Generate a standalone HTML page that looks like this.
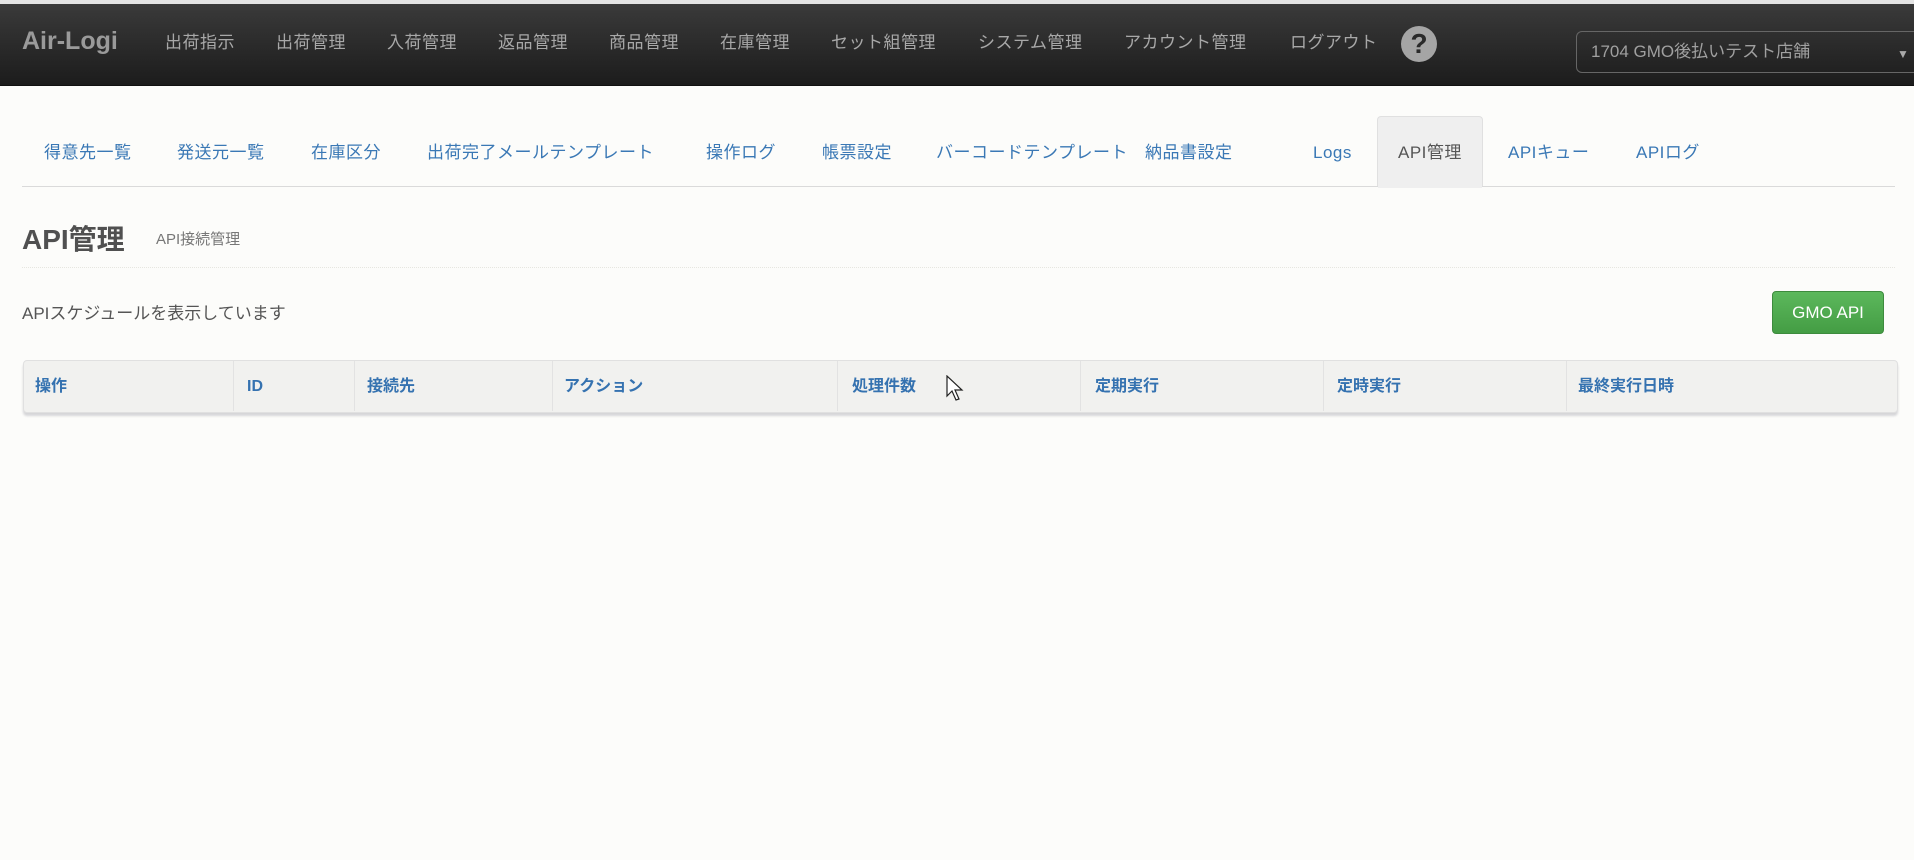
<!DOCTYPE html>
<html><head><meta charset="utf-8"><style>
*{margin:0;padding:0;box-sizing:border-box}
body{width:1914px;height:860px;overflow:hidden;background:#fcfcfa;font-family:"Liberation Sans","Noto Sans CJK JP",sans-serif;position:relative}
.a{position:absolute;white-space:nowrap;line-height:24px}
#top{position:absolute;left:0;top:0;width:1914px;height:4px;background:#e4e4e4}
#nav{position:absolute;left:0;top:4px;width:1914px;height:82px;background:linear-gradient(#3a3a3a,#1c1c1c);border-bottom:1px solid #111}
.n{font-size:17px;color:#a8a8a8;top:31px;letter-spacing:0.5px}
.t{font-size:17px;color:#3a78b5;top:141px;letter-spacing:0.5px}
.h{font-size:16px;color:#3572b0;font-weight:bold;top:375px}
.sep{position:absolute;top:361px;width:1px;height:50px;background:#e2e2e2}
</style></head><body>
<div id="top"></div>
<div id="nav"></div>
<div class="a" style="left:22px;top:29px;font-size:25px;font-weight:bold;color:#9a9a9a">Air-Logi</div>
<div class="a n" style="left:165px">出荷指示</div>
<div class="a n" style="left:276px">出荷管理</div>
<div class="a n" style="left:387px">入荷管理</div>
<div class="a n" style="left:498px">返品管理</div>
<div class="a n" style="left:609px">商品管理</div>
<div class="a n" style="left:720px">在庫管理</div>
<div class="a n" style="left:831px">セット組管理</div>
<div class="a n" style="left:978px">システム管理</div>
<div class="a n" style="left:1124px">アカウント管理</div>
<div class="a n" style="left:1290px">ログアウト</div>
<div class="a" style="left:1401px;top:26px;width:36px;height:36px;border-radius:50%;background:#a5a5a5;color:#2a2a2a;font-size:28px;font-weight:bold;text-align:center;line-height:36px">?</div>
<div class="a" style="left:1576px;top:31px;width:350px;height:42px;border:1px solid #666;border-radius:6px;color:#a0a0a0;font-size:17px;line-height:40px;padding-left:14px">1704 GMO後払いテスト店舗</div>
<div class="a" style="left:1897px;top:42px;color:#aaa;font-size:12px">▼</div>

<div class="a" style="left:1377px;top:116px;width:106px;height:71px;background:#efefef;border:1px solid #e0e0e0;border-bottom:none;border-radius:4px 4px 0 0"></div>
<div class="a" style="left:22px;top:186px;width:1873px;height:1px;background:#dadada"></div>
<div class="a" style="left:1378px;top:185px;width:104px;height:3px;background:#efefef"></div>
<div class="a t" style="left:44px">得意先一覧</div>
<div class="a t" style="left:177px">発送元一覧</div>
<div class="a t" style="left:311px">在庫区分</div>
<div class="a t" style="left:427px">出荷完了メールテンプレート</div>
<div class="a t" style="left:706px">操作ログ</div>
<div class="a t" style="left:822px">帳票設定</div>
<div class="a t" style="left:936px">バーコードテンプレート</div>
<div class="a t" style="left:1145px">納品書設定</div>
<div class="a t" style="left:1313px">Logs</div>
<div class="a t" style="left:1398px;color:#555">API管理</div>
<div class="a t" style="left:1508px">APIキュー</div>
<div class="a t" style="left:1636px">APIログ</div>

<div class="a" style="left:22px;top:224px;font-size:28px;line-height:32px;font-weight:bold;color:#505050">API管理</div>
<div class="a" style="left:156px;top:228px;font-size:15px;color:#777">API接続管理</div>
<div class="a" style="left:22px;top:267px;width:1873px;border-top:1px dotted #e6e6e0"></div>
<div class="a" style="left:22px;top:302px;font-size:17px;color:#555">APIスケジュールを表示しています</div>
<div class="a" style="left:1772px;top:291px;width:112px;height:43px;background:linear-gradient(#5cb85c,#449d44);border:1px solid #3d8b3d;border-radius:4px;color:#fff;font-size:17px;text-align:center;line-height:41px">GMO API</div>

<div class="a" style="left:23px;top:360px;width:1875px;height:53px;background:#f1f1ef;border:1px solid #e0e0e0;border-radius:4px;box-shadow:0 3px 2px #d6d6d8"></div>
<div class="sep" style="left:233px"></div>
<div class="sep" style="left:354px"></div>
<div class="sep" style="left:552px"></div>
<div class="sep" style="left:837px"></div>
<div class="sep" style="left:1080px"></div>
<div class="sep" style="left:1323px"></div>
<div class="sep" style="left:1566px"></div>
<div class="a h" style="left:35px">操作</div>
<div class="a h" style="left:247px">ID</div>
<div class="a h" style="left:367px">接続先</div>
<div class="a h" style="left:564px">アクション</div>
<div class="a h" style="left:852px">処理件数</div>
<div class="a h" style="left:1095px">定期実行</div>
<div class="a h" style="left:1337px">定時実行</div>
<div class="a h" style="left:1578px">最終実行日時</div>
<svg class="a" style="left:946px;top:375px" width="20" height="28" viewBox="0 0 20 28"><path d="M1 1 L1 21 L6 16 L10 25 L13 24 L9 15 L16 15 Z" fill="#fff" stroke="#222" stroke-width="1.2"/></svg>
</body></html>
